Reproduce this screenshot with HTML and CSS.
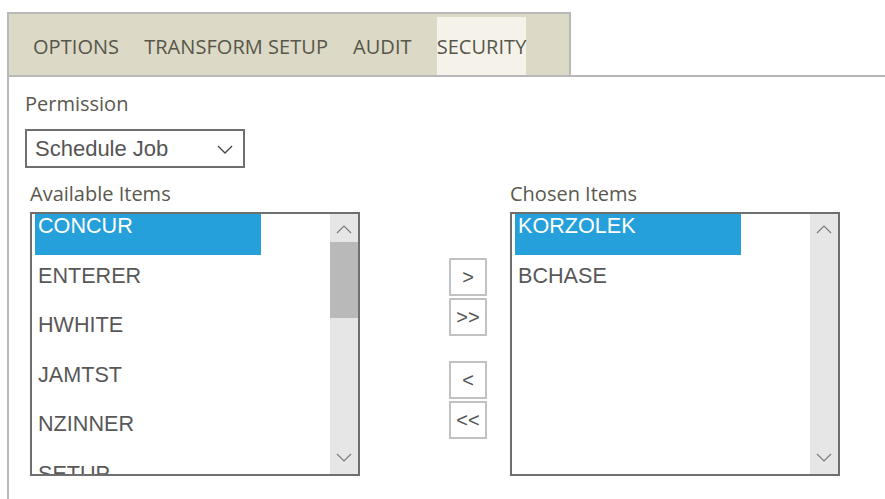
FILE: index.html
```html
<!DOCTYPE html>
<html>
<head>
<meta charset="utf-8">
<link rel="stylesheet" href="styles.css">
</head>
<body>
<div class="page">
  <div class="tabbar">
    <div class="tab">OPTIONS</div>
    <div class="tab">TRANSFORM SETUP</div>
    <div class="tab">AUDIT</div>
    <div class="tab active">SECURITY</div>
  </div>
  <div class="panel">
    <div class="label">Permission</div>
    <div class="select">
      <span class="select-text">Schedule Job</span>
      <svg class="select-chev" width="16" height="9" viewBox="0 0 16 9"><path d="M1 1 L8 8 L15 1" fill="none" stroke="#444" stroke-width="1.3"/></svg>
    </div>
    <div class="lists">
      <div class="col">
        <div class="label">Available Items</div>
        <div class="listbox">
          <div class="items">
            <div class="item selected">CONCUR</div>
            <div class="item">ENTERER</div>
            <div class="item">HWHITE</div>
            <div class="item">JAMTST</div>
            <div class="item">NZINNER</div>
            <div class="item">SETUP</div>
          </div>
          <div class="scrollbar">
            <div class="arrow up"><svg width="16" height="9" viewBox="0 0 16 9"><path d="M1 8 L8 1 L15 8" fill="none" stroke="#7a7a7a" stroke-width="1.2"/></svg></div>
            <div class="thumb"></div>
            <div class="track"></div>
            <div class="arrow down"><svg width="16" height="9" viewBox="0 0 16 9"><path d="M1 1 L8 8 L15 1" fill="none" stroke="#7a7a7a" stroke-width="1.2"/></svg></div>
          </div>
        </div>
      </div>
      <div class="buttons">
        <div class="btn">&gt;</div>
        <div class="btn">&gt;&gt;</div>
        <div class="btn spaced">&lt;</div>
        <div class="btn">&lt;&lt;</div>
      </div>
      <div class="col">
        <div class="label">Chosen Items</div>
        <div class="listbox">
          <div class="items">
            <div class="item selected">KORZOLEK</div>
            <div class="item">BCHASE</div>
          </div>
          <div class="scrollbar">
            <div class="arrow up"><svg width="16" height="9" viewBox="0 0 16 9"><path d="M1 8 L8 1 L15 8" fill="none" stroke="#7a7a7a" stroke-width="1.2"/></svg></div>
            <div class="track"></div>
            <div class="arrow down"><svg width="16" height="9" viewBox="0 0 16 9"><path d="M1 1 L8 8 L15 1" fill="none" stroke="#7a7a7a" stroke-width="1.2"/></svg></div>
          </div>
        </div>
      </div>
    </div>
  </div>
</div>
</body>
</html>
```
FILE: styles.css
```css
* { box-sizing: border-box; }
html, body { margin: 0; padding: 0; background: #fff; overflow: hidden; }
body { font-family: "Open Sans", sans-serif; height: 499px; }
.page { padding: 12px 0 0 7px; height: 100%; display: flex; flex-direction: column; }
.tabbar {
  width: 564px; height: 63px;
  border: 2px solid #b8b8b8; border-bottom: none;
  background: #dcd9c6;
  display: flex; gap: 25px;
  padding: 3px 0 0 24px;
}
.tab {
  font-size: 20px; letter-spacing: 0.05px; color: #57564a;
  padding-top: 16px; line-height: 27px;
  height: 58px; white-space: nowrap;
}
.tab.active { background: #f4f2e9; }
.panel {
  flex: 1;
  border-top: 2px solid #b8b8b8;
  border-left: 2px solid #b8b8b8;
  padding: 13px 0 0 16px;
}
.label { font-size: 20px; line-height: 27px; color: #5a584e; }
.select {
  margin-top: 12px;
  width: 220px; height: 39px;
  border: 2px solid #6f6f6f;
  display: flex; align-items: center; justify-content: space-between;
  padding: 0 10px 0 8px;
}
.select-text { font-family: "Liberation Sans", Arial, sans-serif; font-size: 22px; color: #555; }
.select-chev { margin-top: 1px; }
.lists { display: flex; margin-top: 12px; margin-left: 5px; }
.col { width: 330px; display: flex; flex-direction: column; }
.listbox {
  margin-top: 5px;
  width: 330px; height: 264px;
  border: 2px solid #6f6f6f;
  display: flex;
}
.items { flex: 1; overflow: hidden; padding-left: 3px; }
.item {
  width: 226px; height: 41px; margin-bottom: 8.5px;
  padding-left: 3px;
  font-family: "Liberation Sans", Arial, sans-serif; font-size: 21.6px;
  line-height: 24px; color: #585858;
  white-space: nowrap;
}
.item.selected { background: #26a0da; color: #fff; }
.scrollbar { width: 28px; background: #e6e6e6; display: flex; flex-direction: column; }
.arrow { height: 28px; display: flex; align-items: center; justify-content: center; }
.arrow.up { padding-top: 2px; }
.arrow.down { padding-bottom: 6px; }
.thumb { height: 76px; background: #b9b9b9; }
.track { flex: 1; }
.buttons {
  width: 38px; margin-left: 89px; margin-right: 23px;
  padding-top: 78px;
  display: flex; flex-direction: column; gap: 2px;
}
.btn {
  width: 38px; height: 38px;
  border: 2px solid #c2c2c2; background: #fff;
  display: flex; align-items: center; justify-content: center;
  font-family: "Liberation Sans", Arial, sans-serif; font-size: 20px; color: #555;
}
.btn.spaced { margin-top: 23px; }
```
